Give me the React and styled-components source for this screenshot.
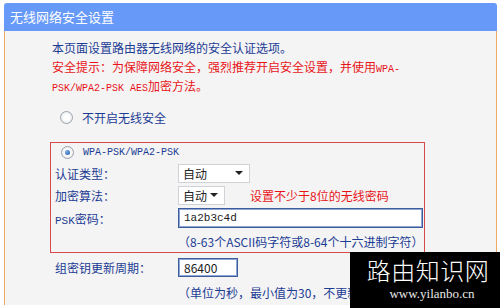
import React from "react";
import styled, { createGlobalStyle } from "styled-components";

const GlobalStyle = createGlobalStyle`
  html, body {
    margin: 0;
    padding: 0;
    background: #ffffff;
    width: 500px;
    height: 308px;
    overflow: hidden;
  }
  body {
    font-family: "Noto Sans CJK SC", "Liberation Sans", sans-serif;
    font-size: 12px;
  }
`;

const Page = styled.div`
  position: relative;
  width: 500px;
  height: 308px;
  padding: 3px 3px 0 4px;
  box-sizing: border-box;
`;

const Panel = styled.div`
  display: flex;
  flex-direction: column;
  height: 299px;
`;

const Header = styled.div`
  height: 28px;
  background: #6699f8;
  border-radius: 3px 3px 0 0;
  color: #ffffff;
  font-size: 13px;
  line-height: 28px;
  padding-left: 6px;
`;

const Body = styled.div`
  flex: 1;
  background: #f4f4f4;
  border-left: 1px solid #f2a865;
  border-right: 1px solid #f2a865;
  padding: 7px 0 0 45px;
`;

const Intro = styled.div`
  padding-left: 2px;
  height: 19px;
  line-height: 19px;
  white-space: nowrap;
  color: ${(p) => (p.$warn ? "#e8141a" : "#1c3c94")};
`;

const Mono = styled.span`
  font-family: "Liberation Mono", "Courier New", monospace;
  font-size: ${(p) => p.$size || 10}px;
`;

const RadioRow = styled.div`
  display: flex;
  align-items: center;
  height: ${(p) => p.$h || 20}px;
  padding-left: ${(p) => p.$pl || 10}px;
  margin-top: ${(p) => p.$mt || 0}px;
  color: #1c3c94;
`;

const Radio = styled.span`
  width: 11px;
  height: 11px;
  flex: none;
  border-radius: 50%;
  border: 1px solid #9aa3ad;
  background: radial-gradient(circle at 50% 50%, #ffffff 30%, #dde1e6 100%);
  margin-right: 9px;
  display: flex;
  align-items: center;
  justify-content: center;
  &::after {
    content: "";
    display: ${(p) => (p.$checked ? "block" : "none")};
    width: 5px;
    height: 5px;
    border-radius: 50%;
    background: radial-gradient(circle at 35% 35%, #7ab0f0, #1d4f9e);
  }
`;

const Group = styled.div`
  width: 375px;
  box-sizing: border-box;
  border: 1px solid #d84a4a;
  margin-top: 15px;
  padding-left: 4px;
`;

const Row = styled.div`
  display: grid;
  grid-template-columns: 123px 1fr;
  align-items: center;
  height: ${(p) => p.$h || 22}px;
  padding-left: ${(p) => p.$pl || 0}px;
  margin-top: ${(p) => p.$mt || 0}px;
  color: #1c3c94;
`;

const Label = styled.span`
  color: #1c3c94;
  white-space: nowrap;
`;

const Cell = styled.div`
  display: flex;
  align-items: center;
  gap: 25px;
`;

const Select = styled.div`
  width: ${(p) => p.$w}px;
  height: 19px;
  box-sizing: border-box;
  background: #ffffff;
  border: 1px solid #cfd3d8;
  display: flex;
  align-items: center;
  justify-content: space-between;
  padding: 0 6px 0 4px;
  color: #222222;
  font-size: 12px;
  &::after {
    content: "";
    border-left: 4px solid transparent;
    border-right: 4px solid transparent;
    border-top: 4px solid #222222;
  }
`;

const Input = styled.div`
  width: ${(p) => p.$w}px;
  height: ${(p) => p.$hgt || 20}px;
  box-sizing: border-box;
  background: #ffffff;
  border: 1px solid #3d5c9e;
  box-shadow: inset 0 0 0 1px #8fa6d3;
  display: flex;
  align-items: center;
  padding-left: 5px;
  color: #1a1a1a;
`;

const Hint = styled.span`
  color: ${(p) => (p.$red ? "#e8141a" : "#1c3c94")};
  white-space: nowrap;
`;

const Watermark = styled.div`
  position: absolute;
  left: 350px;
  top: 252px;
  width: 150px;
  height: 56px;
  background: #000000;
  display: flex;
  flex-direction: column;
  align-items: center;
  color: #ffffff;
`;

const MarkTitle = styled.div`
  font-size: 24px;
  font-weight: 300;
  line-height: 30px;
  margin-top: 3px;
  padding-left: 6px;
  letter-spacing: 0.5px;
`;

const MarkUrl = styled.div`
  font-family: "Liberation Serif", serif;
  font-size: 13px;
  line-height: 16px;
  margin-top: 1px;
  padding-left: 14px;
  color: #e8e8e8;
`;

export default function App() {
  return (
    <>
      <GlobalStyle />
      <Page>
        <Panel>
          <Header>无线网络安全设置</Header>
          <Body>
            <Intro>本页面设置路由器无线网络的安全认证选项。</Intro>
            <Intro $warn>
              安全提示：为保障网络安全，强烈推荐开启安全设置，并使用<Mono>WPA-</Mono>
            </Intro>
            <Intro $warn>
              <Mono>PSK/WPA2-PSK AES</Mono>加密方法。
            </Intro>
            <RadioRow $mt={12}>
              <Radio />
              不开启无线安全
            </RadioRow>
            <Group>
              <RadioRow $h={19} $pl={6}>
                <Radio $checked />
                <Mono>WPA-PSK/WPA2-PSK</Mono>
              </RadioRow>
              <Row>
                <Label>认证类型：</Label>
                <Cell>
                  <Select $w={72}>自动</Select>
                </Cell>
              </Row>
              <Row>
                <Label>加密算法：</Label>
                <Cell>
                  <Select $w={47}>自动</Select>
                  <Hint $red>设置不少于8位的无线密码</Hint>
                </Cell>
              </Row>
              <Row $h={24}>
                <Label>
                  <Mono $size={11}>PSK</Mono>密码：
                </Label>
                <Cell>
                  <Input $w={245}>
                    <Mono $size={11}>1a2b3c4d</Mono>
                  </Input>
                </Cell>
              </Row>
              <Row>
                <span />
                <Hint>（8-63个ASCII码字符或8-64个十六进制字符）</Hint>
              </Row>
            </Group>
            <Row $pl={5} $h={24} $mt={2}>
              <Label>组密钥更新周期：</Label>
              <Cell>
                <Input $w={60} $hgt={19}>86400</Input>
              </Cell>
            </Row>
            <Row $pl={5} $h={26}>
              <span />
              <Hint>（单位为秒，最小值为30，不更新</Hint>
            </Row>
          </Body>
        </Panel>
        <Watermark>
          <MarkTitle>路由知识网</MarkTitle>
          <MarkUrl>www.yilanbo.cn</MarkUrl>
        </Watermark>
      </Page>
    </>
  );
}
